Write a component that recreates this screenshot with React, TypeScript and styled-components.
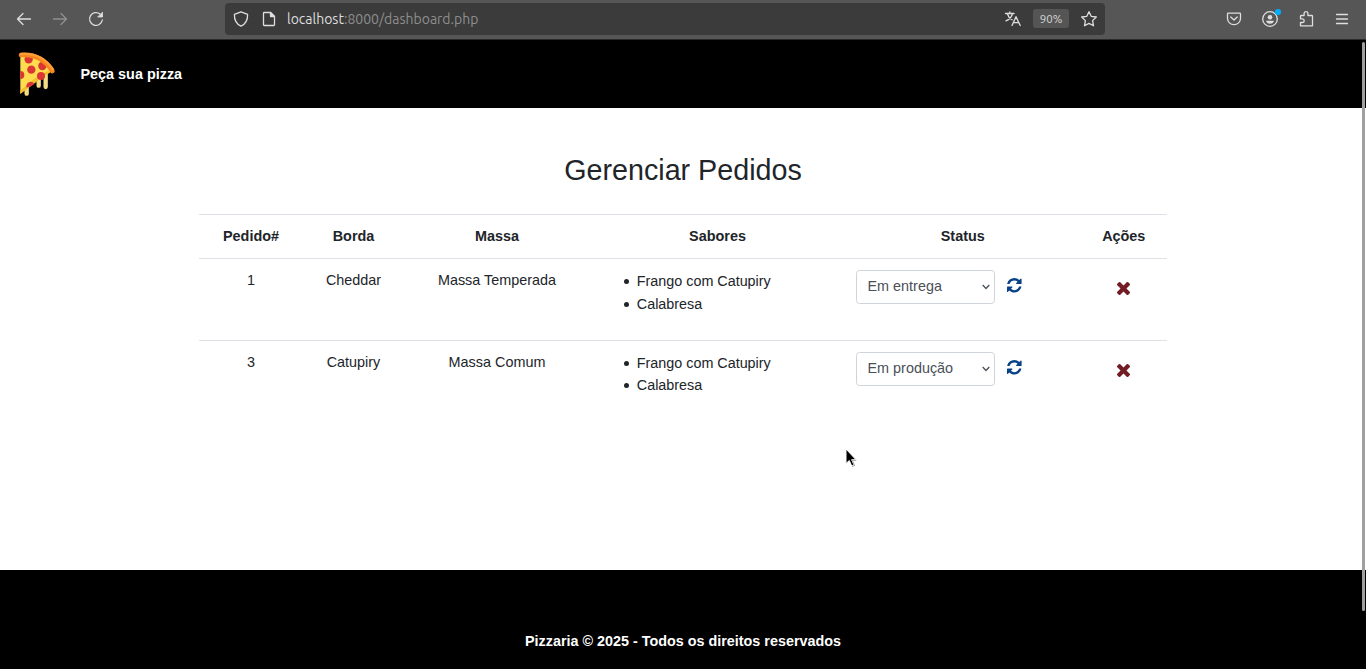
import React from "react";
import styled, { createGlobalStyle } from "styled-components";

const GlobalStyle = createGlobalStyle`
  *, *::before, *::after { box-sizing: border-box; }
  body {
    margin: 0;
    overflow: hidden;
    background: #fff;
    color: #212529;
    font-family: "Liberation Sans", Arial, sans-serif;
    font-size: 14.4px;
    line-height: 1.5;
  }
`;

const Window = styled.div`
  position: relative;
  display: flex;
  flex-direction: column;
  height: 669px;
  overflow: hidden;
`;

const Toolbar = styled.div`
  display: flex;
  align-items: center;
  height: 40px;
  flex: none;
  padding: 0 14px 2px;
  background: #565656;
  border-bottom: 1px solid #2b2b2b;
  color: #dcdcdc;
`;

const ToolGroup = styled.div<{ $width: number }>`
  display: flex;
  align-items: center;
  gap: 16px;
  width: ${(p) => p.$width}px;
`;

const ToolIcon = styled.svg<{ $dim?: boolean }>`
  display: block;
  flex: none;
  width: 20px;
  height: 20px;
  fill: none;
  stroke: ${(p) => (p.$dim ? "#8f8f8f" : "#dedede")};
  stroke-width: 1.3;
  stroke-linecap: round;
  stroke-linejoin: round;
`;

const PageIcon = styled(ToolIcon)`
  margin-left: 8px;
`;

const AddressBar = styled.div`
  display: flex;
  align-items: center;
  width: 880px;
  height: 32px;
  margin: 0 auto 0 11px;
  padding: 0 6px;
  border-radius: 4px;
  background: #3b3b3b;
`;

const Address = styled.span`
  flex: 1;
  margin-left: 8px;
  color: #8e8e8e;
  font: 14px/20px Ubuntu, "Noto Sans", sans-serif;
  white-space: nowrap;
`;

const Host = styled.span`
  color: #dedede;
`;

const Zoom = styled.span`
  width: 36px;
  height: 19px;
  margin: 0 10px;
  border-radius: 3px;
  background: #555;
  color: #d6d6d6;
  font: 11.5px/20px Ubuntu, "Noto Sans", sans-serif;
  text-align: center;
`;

const SiteHeader = styled.header`
  display: flex;
  align-items: center;
  flex: none;
  height: 68px;
  padding-left: 10px;
  background: #000;
`;

const Logo = styled.svg`
  width: 56px;
  height: 60px;
`;

const NavLink = styled.a`
  margin-left: 14.5px;
  padding-top: 1px;
  color: #fff;
  font-weight: 700;
`;

const Main = styled.main`
  flex: none;
  width: 968px;
  height: 462px;
  margin: 0 auto;
  padding-top: 45px;
`;

const Title = styled.h2`
  height: 34px;
  margin: 0 0 27px;
  font-size: 28.7px;
  font-weight: 400;
  line-height: 34.5px;
  text-align: center;
`;

const Table = styled.table`
  width: 100%;
  table-layout: fixed;
  border-spacing: 0;
  text-align: center;
`;

const Col = styled.col<{ $width: number }>`
  width: ${(p) => p.$width}px;
`;

const Row = styled.tr<{ $height: number }>`
  height: ${(p) => p.$height}px;
`;

const HeadCell = styled.th`
  padding: 0 11px;
  border-top: 1px solid #dee2e6;
  border-bottom: 1px solid #dee2e6;
  font-weight: 700;
`;

const Cell = styled.td<{ $top?: number; $line?: boolean }>`
  padding: ${(p) => p.$top ?? 11}px 11px 0;
  border-top: ${(p) => (p.$line ? "1px solid #dee2e6" : "0")};
  vertical-align: top;
`;

const Flavours = styled.ul<{ $lead: number }>`
  margin: 0;
  padding-left: 23.3px;
  line-height: ${(p) => p.$lead}px;
  text-align: left;
  list-style: none;
`;

const Flavour = styled.li`
  display: flex;
  align-items: center;
  gap: 7.5px;
  font-size: 14.35px;
  &::before {
    content: "";
    width: 5px;
    height: 5px;
    margin-top: 1px;
    border-radius: 50%;
    background: #212529;
  }
`;

const StatusForm = styled.div`
  display: flex;
  align-items: flex-start;
`;

const SelectBox = styled.div`
  display: grid;
  align-items: center;
  width: 139px;
  height: 34px;
  > * { grid-area: 1 / 1; }
`;

const Select = styled.select`
  appearance: none;
  width: 139px;
  height: 34px;
  padding: 0 10.5px 1px;
  border: 1px solid #ced4da;
  border-radius: 3.6px;
  background: #fff;
  color: #495057;
  font: 14.4px/21.6px "Liberation Sans", Arial, sans-serif;
`;

const Chevron = styled.svg`
  justify-self: end;
  width: 8px;
  height: 6px;
  margin-right: 5px;
  fill: none;
  stroke: #495057;
  stroke-width: 1.3;
  pointer-events: none;
`;

const IconButton = styled.button<{ $color: string; $size: number }>`
  display: inline-flex;
  padding: 0;
  border: 0;
  background: none;
  color: ${(p) => p.$color};
  vertical-align: top;
  svg {
    width: ${(p) => p.$size}px;
    height: ${(p) => p.$size}px;
    fill: currentColor;
  }
`;

const UpdateButton = styled(IconButton)`
  margin: 8px 0 0 12px;
`;

const Footer = styled.footer`
  flex: 1;
  padding-top: 61px;
  background: #000;
  color: #fff;
  font-size: 14.37px;
  font-weight: 700;
  text-align: center;
`;

const Scrollbar = styled.div`
  position: absolute;
  top: 42px;
  right: 1px;
  width: 3px;
  height: 569px;
  border-radius: 2px;
  background: #a0a0a0;
`;

const Pointer = styled.svg`
  position: absolute;
  top: 447px;
  left: 843px;
  width: 16px;
  height: 22px;
`;

const orders = [
  { id: 1, crust: "Cheddar", dough: "Massa Temperada", status: "Em entrega", lead: 22.6 },
  { id: 3, crust: "Catupiry", dough: "Massa Comum", status: "Em produção", lead: 22 },
];
const flavours = ["Frango com Catupiry", "Calabresa"];

function RefreshIcon() {
  return (
    <svg viewBox="0 0 1536 1536">
      <path d="M1511 928q0 5-1 7-64 268-268 434.5t-478 166.5q-146 0-282.5-55t-243.5-157l-129 129q-19 19-45 19t-45-19-19-45v-448q0-26 19-45t45-19h448q26 0 45 19t19 45-19 45l-137 137q71 66 161 102t187 36q134 0 250-65t186-179q11-17 53-117 8-23 30-23h192q13 0 22.5 9.5t9.5 22.5zm25-800v448q0 26-19 45t-45 19h-448q-26 0-45-19t-19-45 19-45l138-138q-148-137-349-137-134 0-250 65t-186 179q-11 17-53 117-8 23-30 23h-199q-13 0-22.5-9.5t-9.5-22.5v-7q65-268 270-434.5t480-166.5q146 0 284 55.5t245 156.5l130-129q19-19 45-19t45 19 19 45z" />
    </svg>
  );
}

function CloseIcon() {
  return (
    <svg viewBox="302 366 1188 1188">
      <path d="M1490 1322q0 40-28 68l-136 136q-28 28-68 28t-68-28l-294-294-294 294q-28 28-68 28t-68-28l-136-136q-28-28-28-68t28-68l294-294-294-294q-28-28-28-68t28-68l136-136q28-28 68-28t68 28l294 294 294-294q28-28 68-28t68 28l136 136q28 28 28 68t-28 68l-294 294 294 294q28 28 28 68z" />
    </svg>
  );
}

function PizzaLogo() {
  return (
    <Logo viewBox="0 0 168 180">
      <g stroke="#f4dc86" strokeWidth="13" strokeLinecap="round">
        <path d="M50 125V149" />
        <path d="M86 98V125" />
        <path d="M107 85V129" />
      </g>
      <path d="M31 33Q93 28 126 81Q94 94 73 114L31 149Z" fill="#ffdc4f" />
      <path d="M31 138Q43 131 56 119Q85 92 120 79L123 84Q95 99 76 116L31 150Z" fill="#f3bd2d" />
      <g fill="#d93634">
        <circle cx="56" cy="46" r="12.5" />
        <circle cx="97" cy="66" r="12.5" />
        <circle cx="64" cy="77" r="12.5" />
        <circle cx="93" cy="96" r="12" />
        <path d="M31 81A12 12 0 0 1 31 105Z" />
        <path d="M50 131A12 12 0 1 1 73 121Q63 128 50 131Z" />
      </g>
      <path d="M33 33Q93 28 127 81" fill="none" stroke="#f78621" strokeWidth="14" strokeLinecap="round" />
      <path d="M33 30Q94 25 129 76" fill="none" stroke="#ff9f35" strokeWidth="7" strokeLinecap="round" />
    </Logo>
  );
}

function BrowserToolbar() {
  return (
    <Toolbar>
      <ToolGroup $width={200}>
        <ToolIcon viewBox="0 0 20 20"><path d="M16.5 10H3.5M9 4.5L3.5 10L9 15.5" /></ToolIcon>
        <ToolIcon $dim viewBox="0 0 20 20"><path d="M3.5 10H16.5M11 4.5L16.5 10L11 15.5" /></ToolIcon>
        <ToolIcon viewBox="0 0 20 20">
          <path d="M16.3 11A6.4 6.4 0 1 1 14 5" />
          <path d="M16.5 3.5V8H12Z" fill="#dedede" strokeWidth=".8" />
        </ToolIcon>
      </ToolGroup>
      <AddressBar>
        <ToolIcon viewBox="0 0 20 20">
          <path d="M10 2.8L16.6 5.4C16.8 11 14.8 14.7 10 17.2C5.2 14.7 3.2 11 3.4 5.4Z" />
        </ToolIcon>
        <PageIcon viewBox="0 0 20 20">
          <path d="M5.3 3.5H11.5L15.5 7.5V15.7Q15.5 16.5 14.7 16.5H5.3Q4.5 16.5 4.5 15.7V4.3Q4.5 3.5 5.3 3.5Z" />
          <path d="M11.5 3.5V7.5H15.5Z" fill="#dedede" />
        </PageIcon>
        <Address><Host>localhost</Host>:8000/dashboard.php</Address>
        <ToolIcon viewBox="0 0 20 20">
          <path d="M2.5 4.5H11M6.8 2.8V4.5M9.5 4.5C8.7 7.8 6.5 10.4 3 11.8M4.5 5C5.3 8 7 9.7 9 10.8M9 16.5L13 7.7L17.2 16.5M10.4 13.7H15.9" />
        </ToolIcon>
        <Zoom>90%</Zoom>
        <ToolIcon viewBox="0 0 20 20">
          <path d="M10 2.7L12.2 7.3L17.3 8L13.6 11.6L14.5 16.8L10 14.4L5.5 16.8L6.4 11.6L2.7 8L7.8 7.3Z" />
        </ToolIcon>
      </AddressBar>
      <ToolGroup $width={128}>
        <ToolIcon viewBox="0 0 20 20">
          <path d="M4.3 4.2H15.7Q16.5 4.2 16.5 5V9.5A6.5 6.2 0 0 1 3.5 9.5V5Q3.5 4.2 4.3 4.2ZM6.8 8L10 11L13.2 8" />
        </ToolIcon>
        <ToolIcon viewBox="0 0 20 20" overflow="visible">
          <circle cx="10" cy="10" r="7.3" />
          <circle cx="10" cy="8.2" r="2.3" fill="#dedede" stroke="none" />
          <path d="M6 12.2Q6 11.8 6.5 11.8H13.5Q14 11.8 14 12.2Q12.8 14.7 10 14.7Q7.2 14.7 6 12.2Z" fill="#dedede" stroke="none" />
          <circle cx="18" cy="3" r="3.1" fill="#00adfa" stroke="none" />
        </ToolIcon>
        <ToolIcon viewBox="0 0 20 20">
          <path d="M4.5 7.3Q4.5 6.5 5.3 6.5H8.1V4.6A1.8 1.8 0 0 1 11.9 4.6V6.5H15.6Q16.5 6.5 16.5 7.3V16.8H4.5V13.5H6.3A1.8 1.8 0 0 0 6.3 9.8H4.5Z" />
        </ToolIcon>
        <ToolIcon viewBox="0 0 20 20"><path d="M4.5 5.5H15.5M4.5 10H15.5M4.5 14.5H15.5" /></ToolIcon>
      </ToolGroup>
    </Toolbar>
  );
}

export default function App() {
  return (
    <Window>
      <GlobalStyle />
      <BrowserToolbar />
      <SiteHeader>
        <PizzaLogo />
        <NavLink>Peça sua pizza</NavLink>
      </SiteHeader>
      <Main>
        <Title>Gerenciar Pedidos</Title>
        <Table>
          <colgroup>
            {[104, 101, 186, 255, 235.5, 86.5].map((w, i) => <Col key={i} $width={w} />)}
          </colgroup>
          <thead>
            <Row $height={45}>
              {["Pedido#", "Borda", "Massa", "Sabores", "Status", "Ações"].map((h) => (
                <HeadCell key={h}>{h}</HeadCell>
              ))}
            </Row>
          </thead>
          <tbody>
            {orders.map((o, i) => {
              const line = i > 0;
              return (
                <Row key={o.id} $height={line ? 82 : 81}>
                  <Cell $line={line}>{o.id}</Cell>
                  <Cell $line={line}>{o.crust}</Cell>
                  <Cell $line={line}>{o.dough}</Cell>
                  <Cell $line={line}>
                    <Flavours $lead={o.lead}>
                      {flavours.map((f) => <Flavour key={f}>{f}</Flavour>)}
                    </Flavours>
                  </Cell>
                  <Cell $line={line}>
                    <StatusForm>
                      <SelectBox>
                        <Select defaultValue={o.status}>
                          {orders.map((s) => <option key={s.status}>{s.status}</option>)}
                        </Select>
                        <Chevron viewBox="0 0 8 6"><path d="M.7 1L4 4.5L7.3 1" /></Chevron>
                      </SelectBox>
                      <UpdateButton $color="#084286" $size={14.6}><RefreshIcon /></UpdateButton>
                    </StatusForm>
                  </Cell>
                  <Cell $line={line} $top={23}>
                    <IconButton $color="#721c24" $size={13}><CloseIcon /></IconButton>
                  </Cell>
                </Row>
              );
            })}
          </tbody>
        </Table>
      </Main>
      <Footer>Pizzaria © 2025 - Todos os direitos reservados</Footer>
      <Scrollbar />
      <Pointer viewBox="0 0 16 22">
        <path d="M3 2V16.5L6.3 13.5L8.7 19L11 18L8.7 12.7H13Z" fill="#000" stroke="#fff" strokeWidth="1" />
        <path d="M9.3 13.3H13.3M11.5 18.5L9.5 13.7M9 19.6L11.6 18.5" stroke="#888" strokeWidth=".8" />
      </Pointer>
    </Window>
  );
}
